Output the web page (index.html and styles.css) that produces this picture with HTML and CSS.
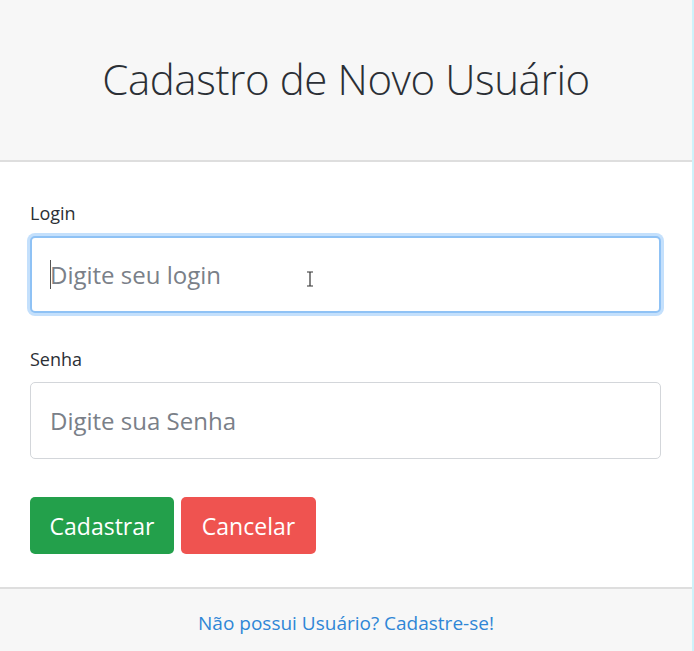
FILE: index.html
```html
<!DOCTYPE html>
<html lang="pt-BR">
<head>
<meta charset="utf-8">
<title>Cadastro de Novo Usuário</title>
<link rel="stylesheet" href="styles.css">
</head>
<body>
<div class="card">
  <header class="card-header">
    <h1 class="title">Cadastro de Novo Usuário</h1>
  </header>
  <form class="card-body">
    <div class="group">
      <label class="label" for="login">Login</label>
      <div class="field focused">
        <input class="control" id="login" type="text" placeholder="Digite seu login">
        <span class="caret"></span>
        <svg class="ibeam" width="8" height="16" viewBox="0 0 8 16"><path d="M1 1h6M4 1v14M1 15h6" stroke="#333" stroke-width="1.2" fill="none"/></svg>
      </div>
    </div>
    <div class="group">
      <label class="label" for="senha">Senha</label>
      <div class="field">
        <input class="control" id="senha" type="password" placeholder="Digite sua Senha">
      </div>
    </div>
    <div class="actions">
      <button type="button" class="btn btn-success">Cadastrar</button>
      <button type="button" class="btn btn-danger">Cancelar</button>
    </div>
  </form>
  <footer class="card-footer">
    <a class="link" href="#">Não possui Usuário? Cadastre-se!</a>
  </footer>
</div>
</body>
</html>
```
FILE: styles.css
```css
* { box-sizing: border-box; }
html, body { margin: 0; padding: 0; background: #ffffff; }
body {
  font-family: "Open Sans", "Noto Sans", sans-serif;
  color: #212529;
  width: 694px;
  height: 651px;
  overflow: hidden;
}
.card {
  width: 694px;
  height: 651px;
  display: flex;
  flex-direction: column;
  border-right: 2px solid #cdf2fa;
  background: #fff;
}
.card-header {
  height: 162px;
  flex: none;
  background: #f7f7f7;
  border-bottom: 2px solid #dedede;
  display: flex;
  align-items: center;
  justify-content: center;
  padding-bottom: 4px;
}
.title {
  margin: 0;
  font-weight: 300;
  font-size: 42px;
  color: #2b2f35;
  letter-spacing: -0.4px;
}
.card-body {
  flex: 1;
  margin: 0;
  padding: 38px 31px 0 30px;
  display: flex;
  flex-direction: column;
}
.group {
  display: flex;
  flex-direction: column;
  margin-bottom: 33px;
}
.group + .group { margin-bottom: 38px; }
.label {
  font-size: 18px;
  line-height: 27px;
  color: #2b2f35;
  margin-bottom: 9px;
}
.field {
  position: relative;
  height: 77px;
}
.control {
  width: 100%;
  height: 77px;
  border: 1px solid #d3d6da;
  border-radius: 5px;
  padding: 0 19px;
  font-family: inherit;
  font-size: 24px;
  color: #495057;
  background: #fff;
  outline: none;
}
.control::placeholder { color: #7a8088; opacity: 1; }
.focused .control {
  border: 2px solid #8fc2f5;
  box-shadow: 0 0 0 3px #c4e0fc;
  padding: 0 18px;
}
.caret {
  position: absolute;
  left: 20px;
  top: 24px;
  width: 1px;
  height: 29px;
  background: #555;
}
.ibeam {
  position: absolute;
  left: 276px;
  top: 35px;
}
.actions {
  display: flex;
  gap: 7px;
}
.btn {
  height: 57px;
  border: none;
  border-radius: 5px;
  color: #fff;
  font-family: inherit;
  font-size: 23px;
  padding: 0 10px;
  cursor: pointer;
}
.btn-success { background: #23a04b; width: 144px; }
.btn-danger { background: #ef5350; width: 135px; }
.card-footer {
  flex: none;
  height: 64px;
  background: #f7f7f7;
  border-top: 2px solid #dedede;
  display: flex;
  align-items: center;
  justify-content: center;
  padding-top: 5px;
}
.link {
  font-size: 19px;
  color: #2f86d6;
  text-decoration: none;
}
```
